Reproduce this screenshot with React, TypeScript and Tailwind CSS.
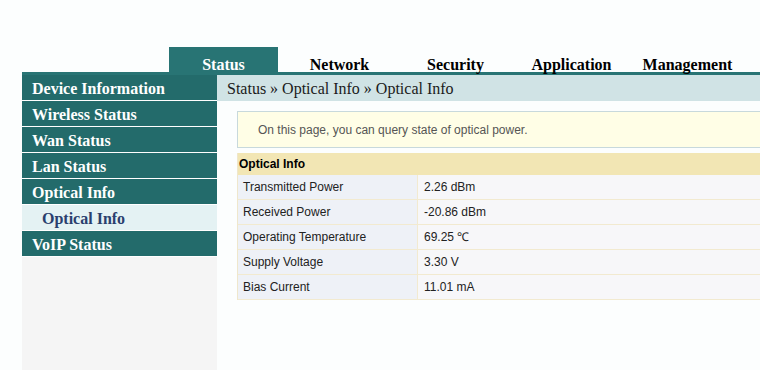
const serif = { fontFamily: '"Liberation Serif", "Times New Roman", serif' };
const sans = { fontFamily: '"Liberation Sans", Arial, sans-serif' };

const tabs = ["Status", "Network", "Security", "Application", "Management"];

const menu = [
  { label: "Device Information" },
  { label: "Wireless Status" },
  { label: "Wan Status" },
  { label: "Lan Status" },
  { label: "Optical Info" },
  { label: "Optical Info", sub: true },
  { label: "VoIP Status" },
];

const rows = [
  ["Transmitted Power", "2.26 dBm"],
  ["Received Power", "-20.86 dBm"],
  ["Operating Temperature", "69.25 ℃"],
  ["Supply Voltage", "3.30 V"],
  ["Bias Current", "11.01 mA"],
];

export default function App() {
  return (
    <div className="w-[760px] h-[370px] overflow-hidden bg-[#fcfefe] pt-[47px]">
      {/* top tabs */}
      <div className="flex gap-[7px] pl-[169px] h-[25px]" style={serif}>
        {tabs.map((t, i) => (
          <div
            key={t}
            className={
              "w-[109px] shrink-0 text-center text-[16px] font-bold leading-[35px] " +
              (i === 0 ? "bg-[#287474] text-white" : "text-black")
            }
          >
            {t}
          </div>
        ))}
      </div>
      <div className="ml-[22px] h-[3px] bg-[#287474]" />

      <div className="flex h-[295px]">
        {/* sidebar */}
        <div className="w-[195px] ml-[22px] shrink-0 bg-[#f5f5f5] flex flex-col" style={serif}>
          {menu.map((m, i) => (
            <div
              key={i}
              className={
                "flex items-center h-[26px] border-b border-white text-[16px] font-bold pt-[2px] " +
                (m.sub
                  ? "bg-[#e4f2f3] text-[#2a3f6e] pl-[20px]"
                  : "bg-[#236b6b] text-white pl-[10px]")
              }
            >
              {m.label}
            </div>
          ))}
        </div>

        {/* content */}
        <div className="flex-1 min-w-0">
          <div className="h-[26px] bg-[#d0e3e5] flex items-center pl-[10px] pt-[2px] text-[16px] text-[#1a1a1a]" style={serif}>
            Status » Optical Info » Optical Info
          </div>

          <div className="ml-[20px] mt-[10px] h-[37px] bg-[#fffee6] border border-r-0 border-[#c8d9dc] flex items-center pl-[20px] text-[12px] text-[#555]" style={sans}>
            On this page, you can query state of optical power.
          </div>

          <div className="ml-[20px] mt-[5px] border-l border-[#efe7cc]" style={sans}>
            <div className="h-[22px] bg-[#f2e6b4] flex items-center pl-[1px] text-[12px] font-bold text-black">
              Optical Info
            </div>
            {rows.map(([k, v]) => (
              <div key={k} className="flex h-[25px] border-b border-[#f2ead0] text-[12px] text-[#222]">
                <div className="w-[180px] shrink-0 bg-[#eef1f7] border-r border-[#f2ead0] flex items-center pl-[5px]">
                  {k}
                </div>
                <div className="flex-1 bg-[#f7f7f9] flex items-center pl-[6px]">{v}</div>
              </div>
            ))}
          </div>
        </div>
      </div>
    </div>
  );
}
